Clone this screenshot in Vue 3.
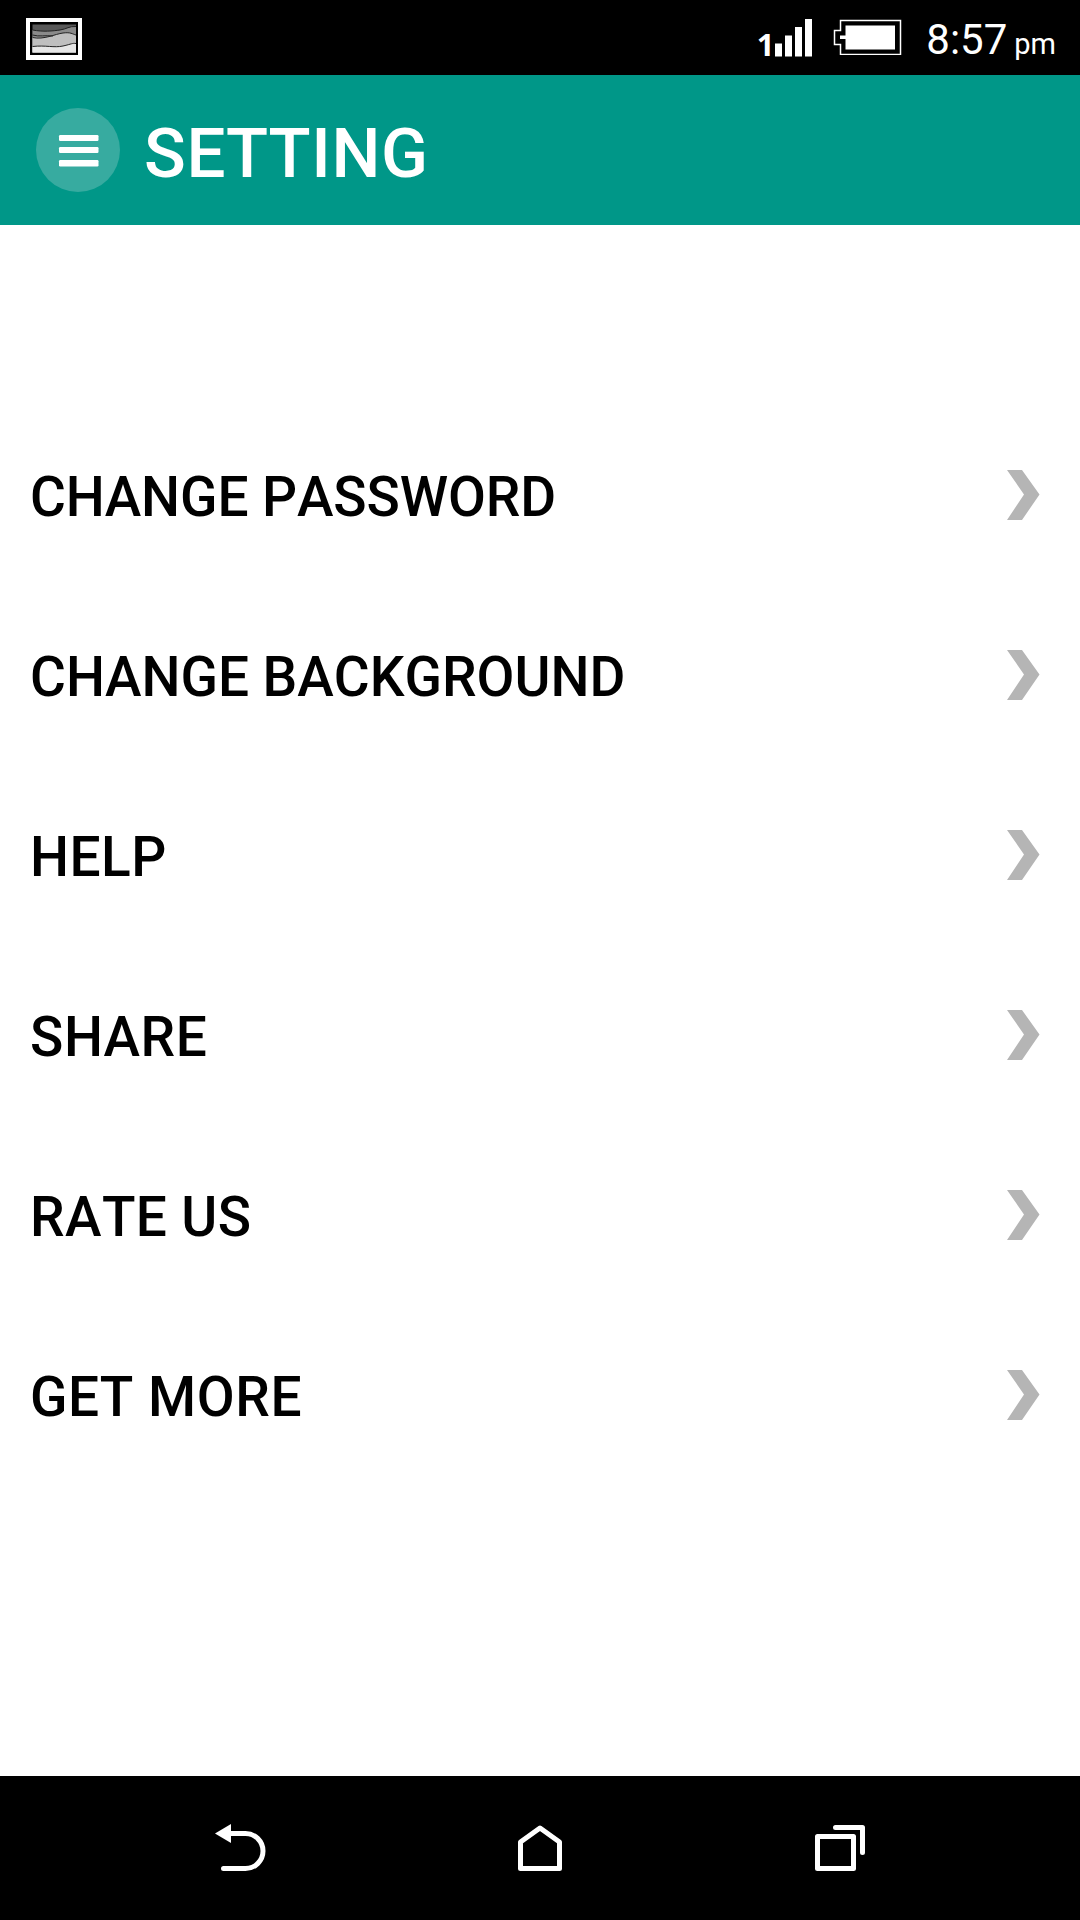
<template>
  <div class="screen">
    <header class="status-bar">
      <svg class="picture-icon" width="56" height="42" viewBox="0 0 56 42">
        <rect width="56" height="42" fill="#fff" />
        <rect x="4" y="4" width="48" height="33" fill="#000" />
        <rect x="6.5" y="6.5" width="43.5" height="28" fill="#595959" />
        <path d="M6.5 12C17 14 27 13 34 12S43 8 50 8.5V34.5H6.5Z" fill="#8a8a8a" />
        <path d="M6.5 19C18 22 29 16 37 15S46 16 50 17V34.5H6.5Z" fill="#bfbfbf" />
        <path d="M6.5 28.5C20 27 28 30 37 28S46 25 50 25.5V34.5H6.5Z" fill="#e6e6e6" />
        <g class="ridges">
          <path d="M6.5 12C17 14 27 13 34 12S43 8 50 8.5" />
          <path d="M6.5 17C13 19 20 17 27 18" />
          <path d="M6.5 19.5C18 22 29 16 37 15S46 16 50 17" />
          <path d="M6.5 28.5C20 27 28 30 37 28S46 25 50 25.5" />
        </g>
      </svg>
      <div class="status-right">
        <div class="signal">
          <span class="sim">1</span>
          <svg width="37" height="38" viewBox="0 0 37 38" fill="#fff">
            <rect x="0" y="24.5" width="7" height="13" />
            <rect x="10" y="16.5" width="7" height="21" />
            <rect x="20" y="8" width="7" height="29.5" />
            <rect x="30" y="0" width="7" height="37.5" />
          </svg>
        </div>
        <svg class="battery" width="69" height="37" viewBox="0 0 69 37">
          <path d="M7.5 2.5H67.5V36.5H7.5V26.5H1.5V12.5H7.5Z" fill="none" stroke="#fff" stroke-width="1.5" />
          <path d="M12.5 7.5H62V31.5H12.5V21H7V17.5H12.5Z" fill="#fff" />
        </svg>
        <div class="clock">8:57<span class="meridiem">pm</span></div>
      </div>
    </header>

    <div class="app-bar">
      <button class="menu-btn" aria-label="Menu">
        <svg width="84" height="84" viewBox="0 0 84 84" fill="#fff">
          <rect x="23" y="27" width="39.5" height="6" rx="1.2" />
          <rect x="23" y="39" width="39.5" height="6" rx="1.2" />
          <rect x="23" y="52" width="39.5" height="6.5" rx="1.2" />
        </svg>
      </button>
      <h1 class="title">SETTING</h1>
    </div>

    <main class="settings">
      <div v-for="item in items" :key="item.label" class="row">
        <span class="label" :style="{ letterSpacing: item.tracking + 'px' }">{{ item.label }}</span>
        <svg class="chevron" width="33" height="50" viewBox="0 0 33 50">
          <path d="M0 0H15L32.5 24.5L15 50H0L17 24.5Z" fill="#b5b5b5" />
        </svg>
      </div>
    </main>

    <nav class="nav-bar">
      <button class="nav-btn" aria-label="Back">
        <svg width="60" height="60" viewBox="0 0 60 60">
          <path d="M5 15.5L21 6V25Z" fill="#fff" />
          <path d="M19 15.5H35.5A17.5 17.5 0 0 1 35.5 50.5H13.5" class="line" />
        </svg>
      </button>
      <button class="nav-btn" aria-label="Home">
        <svg width="60" height="60" viewBox="0 0 60 60">
          <path d="M10.5 24L30 10L49.5 24V50.5H10.5Z" class="line" />
        </svg>
      </button>
      <button class="nav-btn" aria-label="Recent apps">
        <svg width="60" height="60" viewBox="0 0 60 60">
          <path d="M7.5 18.5H43.5V50.5H7.5Z" class="line" />
          <path d="M25.5 9.5H52.5V34.5" class="line" />
        </svg>
      </button>
    </nav>
  </div>
</template>

<script setup>
const items = [
  { label: 'CHANGE PASSWORD', tracking: -0.1 },
  { label: 'CHANGE BACKGROUND', tracking: 0 },
  { label: 'HELP', tracking: 0.5 },
  { label: 'SHARE', tracking: 0.6 },
  { label: 'RATE US', tracking: 0.4 },
  { label: 'GET MORE', tracking: 0.6 },
]
</script>

<style>
body {
  margin: 0;
}
</style>

<style scoped>
.screen {
  width: 1080px;
  height: 1920px;
  display: flex;
  flex-direction: column;
  background: #fff;
  font-family: Roboto, sans-serif;
  font-kerning: none;
  overflow: hidden;
}

button {
  border: none;
  padding: 0;
  background: none;
}

svg {
  display: block;
}

.status-bar {
  height: 75px;
  flex-shrink: 0;
  box-sizing: border-box;
  padding: 18px 24px 0 26px;
  display: flex;
  justify-content: space-between;
  align-items: flex-start;
  background: #000;
  color: #fff;
}

.ridges {
  fill: none;
  stroke: #222;
  stroke-width: 1;
}

.status-right {
  display: flex;
  align-items: flex-start;
}

.signal {
  display: flex;
  align-items: flex-end;
  margin-top: 1px;
}

.sim {
  width: 18px;
  margin-bottom: -2px;
  font-family: "Open Sans", sans-serif;
  font-size: 31px;
  font-weight: 700;
  line-height: 30px;
}

.battery {
  margin-left: 21px;
}

.clock {
  margin: 1px 0 0 24.5px;
  font-size: 42px;
  line-height: 42px;
  white-space: nowrap;
}

.meridiem {
  margin-left: 7px;
  font-size: 29px;
}

.app-bar {
  height: 150px;
  flex-shrink: 0;
  padding-left: 36px;
  display: flex;
  align-items: center;
  background: #009788;
}

.menu-btn {
  width: 84px;
  height: 84px;
  border-radius: 50%;
  background: #37aba0;
}

.title {
  margin: 8px 0 0 24px;
  font-size: 69px;
  font-weight: 500;
  line-height: 80px;
  letter-spacing: 0.6px;
  color: #fff;
}

.settings {
  flex: 1;
  padding-top: 180px;
}

.row {
  height: 180px;
  padding: 0 40px 0 30px;
  display: flex;
  align-items: center;
  justify-content: space-between;
}

.label {
  margin-top: 4px;
  font-size: 55px;
  font-weight: 500;
  line-height: 64px;
  color: #000;
}

.nav-bar {
  height: 144px;
  flex-shrink: 0;
  box-sizing: border-box;
  padding: 42px 210px 0;
  display: flex;
  justify-content: space-between;
  align-items: flex-start;
  background: #000;
}

.line {
  fill: none;
  stroke: #fff;
  stroke-width: 5;
  stroke-linecap: round;
  stroke-linejoin: round;
}
</style>
